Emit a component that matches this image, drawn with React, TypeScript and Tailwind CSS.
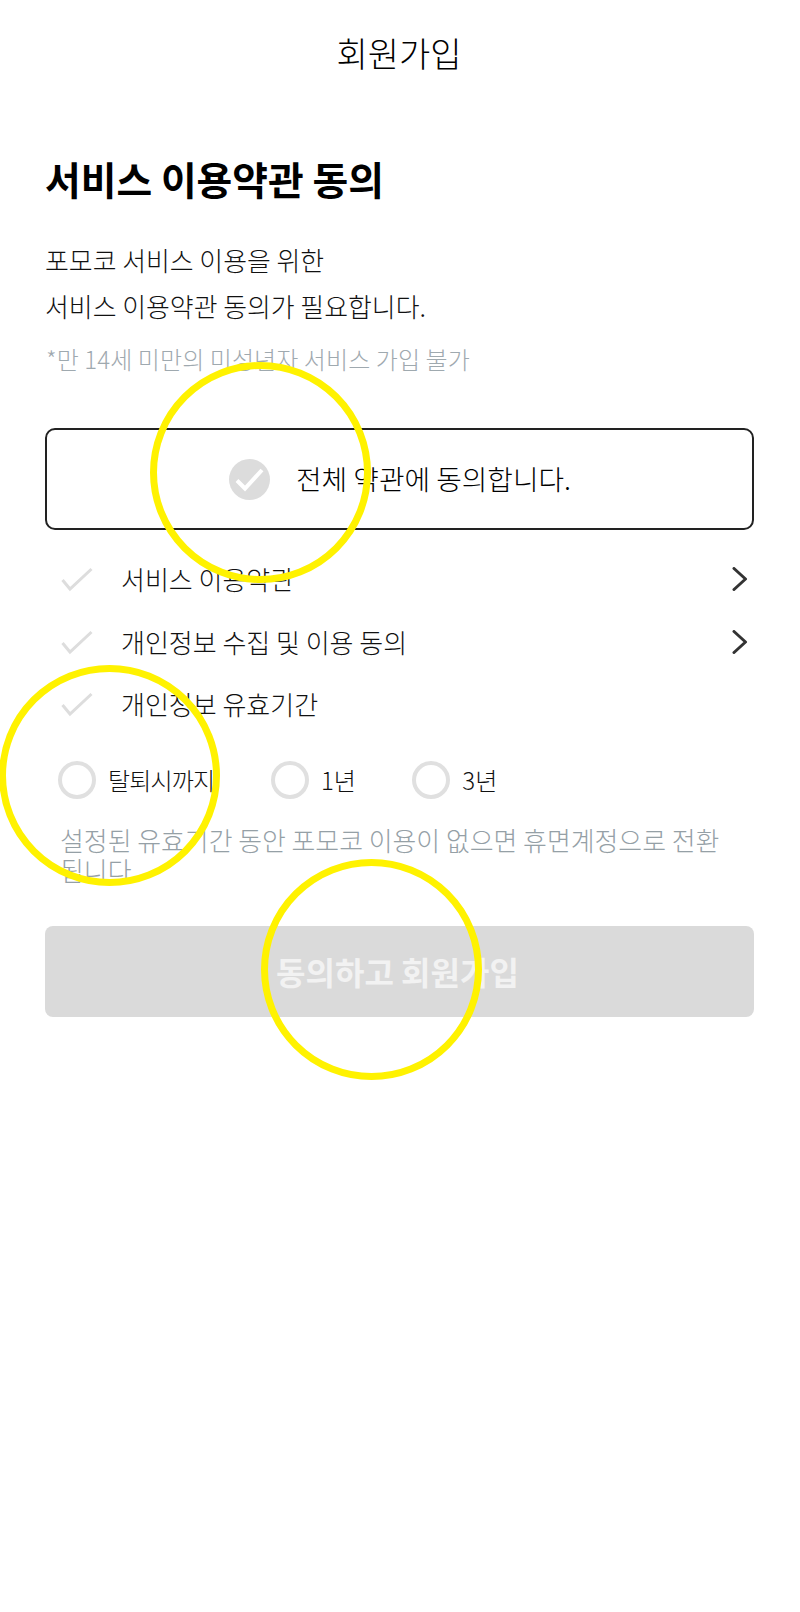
const font = { fontFamily: '"Noto Sans CJK KR", "Noto Sans", sans-serif' };

function Check() {
  return (
    <svg width="32" height="26" viewBox="0 0 32 26" fill="none" className="shrink-0">
      <path d="M1.5 14 L9 23 L30.5 3" stroke="#dddddd" strokeWidth="3" />
    </svg>
  );
}

function Chevron() {
  return (
    <svg width="16" height="24" viewBox="0 0 16 24" fill="none" className="shrink-0">
      <path d="M2 1.5 L13.5 12 L2 22.5" stroke="#333333" strokeWidth="3" strokeLinecap="round" strokeLinejoin="round" />
    </svg>
  );
}

function TermRow({ label, more }: { label: string; more?: boolean }) {
  return (
    <div className="flex h-[62.5px] items-center justify-between pl-[16px] pr-[6px]">
      <div className="flex items-center gap-[28px]">
        <Check />
        <span className="text-[26px] font-light leading-none text-[#111111]">{label}</span>
      </div>
      {more && <Chevron />}
    </div>
  );
}

function Radio({ label, tight }: { label: string; tight?: boolean }) {
  return (
    <div className="flex items-center gap-[12px]">
      <span className="h-[38px] w-[38px] rounded-full border-[4px] border-[#e0e0e0]" />
      <span className={tight ? 'text-[24px] font-light leading-none tracking-[-0.8px] text-[#111111]' : 'text-[24px] font-light leading-none text-[#111111]'}>{label}</span>
    </div>
  );
}

function Ring({ className }: { className: string }) {
  return <div className={`pointer-events-none absolute h-[221px] w-[221px] rounded-full border-[7.5px] border-[#fff200] ${className}`} />;
}

export default function App() {
  return (
    <div className="relative min-h-[1612px] w-[800px] overflow-hidden bg-white" style={font}>
      <header className="flex h-[106px] items-center justify-center pr-[2px] text-[34px] font-light leading-none text-black">회원가입</header>

      <main className="pl-[45px] pr-[46px]">
        <h1 className="mt-[48px] text-[38.8px] font-bold leading-[48px] text-black">서비스 이용약관 동의</h1>

        <div className="mt-[35px] text-[25.9px] font-light leading-[46px] text-[#111111]">
          <p>포모코 서비스 이용을 위한</p>
          <p>서비스 이용약관 동의가 필요합니다.</p>
        </div>
        <p className="mt-[7px] pl-[1px] text-[24px] font-light leading-[45px] tracking-[0.1px] text-[#9fa9af]">*만 14세 미만의 미성년자 서비스 가입 불가</p>

        <div className="mt-[47px] flex h-[102px] items-center justify-center gap-[26px] rounded-[10px] border-2 border-[#222222] pl-[1px]">
          <svg width="41" height="41" viewBox="0 0 41 41" className="shrink-0">
            <circle cx="20.5" cy="20.5" r="20.5" fill="#dcdcdc" />
            <path d="M8 21.5 L16 29.5 L33 11" stroke="#ffffff" strokeWidth="4" fill="none" />
          </svg>
          <span className="text-[27.8px] font-light leading-none text-black">전체 약관에 동의합니다.</span>
        </div>

        <div className="mt-[18px]">
          <TermRow label="서비스 이용약관" more />
          <TermRow label="개인정보 수집 및 이용 동의" more />
          <TermRow label="개인정보 유효기간" />
        </div>

        <div className="mt-[25px] flex items-center gap-[56.5px] pl-[13px]">
          <Radio label="탈퇴시까지" tight />
          <Radio label="1년" />
          <Radio label="3년" />
        </div>

        <p className="mt-[26px] pl-[15px] pr-[20px] text-[25.9px] font-light leading-[30px] text-[#95a0a6]">
          설정된 유효기간 동안 포모코 이용이 없으면 휴면계정으로 전환 됩니다
        </p>

        <button className="mt-[41px] flex h-[91px] w-full items-center justify-center rounded-[8px] bg-[#dadada] pr-[4px] text-[32px] font-bold leading-none text-[#f2f2f2]">
          동의하고 회원가입
        </button>
      </main>

      <Ring className="left-[150px] top-[362px]" />
      <Ring className="left-[-1px] top-[665px]" />
      <Ring className="left-[261px] top-[859px]" />
    </div>
  );
}
